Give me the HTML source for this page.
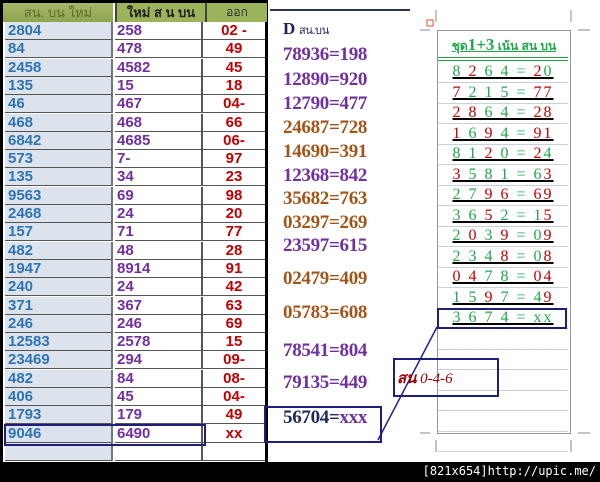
<!DOCTYPE html>
<html><head><meta charset="utf-8"><style>
body{margin:0;width:600px;height:482px;background:#000;position:relative;overflow:hidden;font-family:"Liberation Sans","Noto Sans CJK SC",sans-serif}
.a{position:absolute}
.c{position:absolute;height:17px;line-height:18px;font-weight:bold;font-size:15px;font-family:"Liberation Sans","Noto Sans CJK SC",sans-serif;box-sizing:border-box;border-bottom:1px solid #555}
.c1{left:5px;width:108px;background:#dce3ed;color:#2e74b5;padding-left:3px;border-right:2px solid #777}
.c2{left:115px;width:88px;background:#fff;color:#7030a0;padding-left:2px;border-right:2px solid #555}
.c3{left:203px;width:62px;background:#fff;color:#c00000;text-align:center}
.m{position:absolute;left:283px;font:bold 19px "Liberation Serif","DejaVu Serif",serif;letter-spacing:-0.3px}
.p{color:#7030a0}.b{color:#a0561a}
.r{position:absolute;left:438px;width:130px;height:20px;border-bottom:1px solid #c8d0dc;text-align:center;font:16px "Liberation Serif",serif;line-height:20px;letter-spacing:2px;text-decoration:underline;text-decoration-thickness:2px}
.g{color:#1fa84a}.d{color:#c00000}
</style></head><body>
<div class="a" style="left:3px;top:3px;width:262px;height:459px;background:#fff"></div>
<div class="a" style="left:3px;top:3px;width:110px;height:19px;background:linear-gradient(#a8b868,#8fa550);color:#5a6a30;font-size:13px;text-align:center;line-height:19px;font-family:'Liberation Sans','Noto Sans CJK SC',sans-serif">สน. บน ใหม่</div>
<div class="a" style="left:115px;top:3px;width:88px;height:19px;background:#9bb35a;color:#222;font-weight:bold;font-size:13px;text-align:center;line-height:19px;border-left:2px solid #444">ใหม่ ส น บน</div>
<div class="a" style="left:205px;top:3px;width:60px;height:19px;background:#9bb35a;color:#333;font-size:12px;text-align:center;line-height:19px;border-left:2px solid #444">ออก</div>
<div id="t"></div>
<script>
var d=[["2804","258","02 -"],["84","478","49"],["2458","4582","45"],["135","15","18"],["46","467","04-"],["468","468","66"],["6842","4685","06-"],["573","7-","97"],["135","34","23"],["9563","69","98"],["2468","24","20"],["157","71","77"],["482","48","28"],["1947","8914","91"],["240","24","42"],["371","367","63"],["246","246","69"],["12583","2578","15"],["23469","294","09-"],["482","84","08-"],["406","45","04-"],["1793","179","49"],["9046","6490","xx"],["","",""]];
var h="";d.forEach(function(r,i){var t=(22+i*18.3).toFixed(1);h+='<div class="c c1" style="top:'+t+'px;height:18px">'+r[0]+'</div><div class="c c2" style="top:'+t+'px;height:18px">'+r[1]+'</div><div class="c c3" style="top:'+t+'px;height:18px">'+r[2]+'</div>';});
document.getElementById("t").innerHTML=h;
</script>
<div class="a" style="left:4px;top:424px;width:198px;height:18px;border:2px solid #1f1f7a"></div>
<div class="a" style="left:268px;top:0;width:332px;height:462px;background:#fff"></div>
<div class="a" style="left:270px;top:9px;width:140px;height:2px;background:#2a3550"></div>
<div class="m" style="top:19px;color:#1f1f5a;font-size:17px">D <span style="font-size:11px;font-weight:normal">สน.บน</span></div>
<div class="m p" style="top:44px">78936=198</div>
<div class="m p" style="top:69px">12890=920</div>
<div class="m p" style="top:93px">12790=477</div>
<div class="m b" style="top:117px">24687=728</div>
<div class="m b" style="top:141px">14690=391</div>
<div class="m p" style="top:165px">12368=842</div>
<div class="m b" style="top:188px">35682=763</div>
<div class="m b" style="top:212px">03297=269</div>
<div class="m p" style="top:235px">23597=615</div>
<div class="m b" style="top:268px">02479=409</div>
<div class="m b" style="top:302px">05783=608</div>
<div class="m p" style="top:340px">78541=804</div>
<div class="m p" style="top:372px">79135=449</div>
<div class="m" style="top:407px;color:#1f2a5a">56704=<span class="p">xxx</span></div>
<div class="a" style="left:264px;top:406px;width:114px;height:33px;border:2px solid #1f1f7a"></div>
<div class="a" style="left:437px;top:30px;width:132px;height:402px;border:1px solid #999;background:#fff"></div>
<div class="a" style="left:438px;top:35px;width:132px;text-align:center;color:#1fa84a;font-size:12px;font-weight:bold;text-decoration:underline">ชุด<span style="font-size:17px;font-family:'Liberation Serif',serif">1+3</span> เน้น สน บน</div>
<div class="a" style="left:438px;top:57px;width:130px;height:2px;border-top:1px solid #1fa84a;border-bottom:1px solid #1fa84a"></div>
<div id="r"></div>
<script>
var R=[["g8 d2 g6 g4 g= d2g0"],["d7 g2 g1 g5 g= d77"],["d2 d8 g6 g4 g= d28"],["d1 g6 d9 g4 g= d91"],["g8 g1 d2 g0 g= d2g4"],["d3 g5 g8 g1 g= g6d3"],["g2 g7 d9 d6 g= d69"],["g3 g6 d5 g2 g= g1d5"],["g2 d0 g3 d9 g= g0d9"],["g2 g3 g4 d8 g= g0d8"],["d0 d4 g7 g8 g= d04"],["g1 g5 d9 g7 g= g4d9"],["g3 g6 g7 g4 g= gxx"],[""],[""],[""],[""],[""],[""]];
var s="";R.forEach(function(r,i){var t=(62+i*20.5).toFixed(1);var inner=r[0].split(" ").map(function(w){if(!w)return"";var o="",j=0;while(j<w.length){var c=w[j]=="g"?"g":"d";j++;var txt="";while(j<w.length&&w[j]!="g"&&w[j]!="d"){txt+=w[j];j++;}o+='<span class="'+c+'">'+txt+'</span>';}return o;}).join(" ");s+='<div class="r" style="top:'+t+'px">'+inner+'</div>';});
document.getElementById("r").innerHTML=s;
</script>
<div class="a" style="left:437px;top:308px;width:126px;height:17px;border:2px solid #1f1f7a"></div>
<svg class="a" style="left:0;top:0" width="600" height="482"><line x1="378" y1="440" x2="437" y2="327" stroke="#1f1f9a" stroke-width="1.5"/>
<rect x="427" y="20" width="6" height="6" fill="none" stroke="#e05030"/><line x1="420" y1="30" x2="430" y2="30" stroke="#888"/><line x1="578" y1="30" x2="590" y2="30" stroke="#888"/><line x1="436" y1="10" x2="436" y2="22" stroke="#888"/><line x1="571" y1="10" x2="571" y2="22" stroke="#888"/>
<line x1="420" y1="433" x2="430" y2="433" stroke="#888"/><line x1="578" y1="433" x2="590" y2="433" stroke="#888"/><line x1="436" y1="440" x2="436" y2="452" stroke="#888"/><line x1="571" y1="440" x2="571" y2="452" stroke="#888"/></svg>
<div class="a" style="left:393px;top:358px;width:102px;height:35px;border:2px solid #1f1f7a"></div>
<div class="a" style="left:397px;top:366px;color:#a00000;font:italic bold 15px 'Liberation Serif','Noto Sans CJK SC',serif">สน <span style="font-weight:normal">0-4-6</span></div>
<div class="a" style="right:4px;top:464px;color:#fff;font:12px 'DejaVu Sans Mono',monospace">[821x654]http://upic.me/</div>
</body></html>
